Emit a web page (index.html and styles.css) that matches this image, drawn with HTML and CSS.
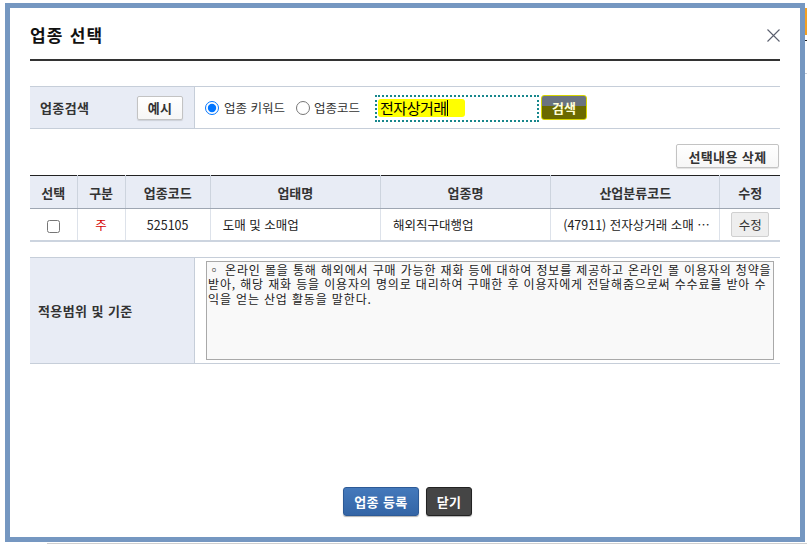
FILE: index.html
```html
<!DOCTYPE html>
<html lang="ko">
<head>
<meta charset="utf-8">
<title>업종 선택</title>
<link rel="stylesheet" href="styles.css">
</head>
<body>
<div class="page">
  <div class="modal">
    <div class="modal-head">
      <h1 class="title">업종 선택</h1>
      <button class="close" aria-label="닫기">
        <svg width="13" height="13" viewBox="0 0 13 13"><path d="M0.5 0.5 L12.5 12.5 M12.5 0.5 L0.5 12.5" stroke="#5a5f6e" stroke-width="1.1" fill="none"/></svg>
      </button>
    </div>

    <div class="form-row search-row">
      <div class="label-cell">
        <span class="label">업종검색</span>
        <button class="btn-white small">예시</button>
      </div>
      <div class="value-cell">
        <label class="radio"><input type="radio" name="t" checked><span>업종 키워드</span></label>
        <label class="radio"><input type="radio" name="t"><span>업종코드</span></label>
        <div class="search-input"><span class="hl">전자상거래</span><span class="caret"></span></div>
        <button class="btn-search">검색</button>
      </div>
    </div>

    <div class="tools">
      <button class="btn-white wide">선택내용 삭제</button>
    </div>

    <table class="grid">
      <colgroup>
        <col style="width:47px"><col style="width:48px"><col style="width:85px"><col style="width:170px"><col style="width:170px"><col style="width:169px"><col style="width:60px">
      </colgroup>
      <thead>
        <tr><th>선택</th><th>구분</th><th>업종코드</th><th>업태명</th><th>업종명</th><th>산업분류코드</th><th>수정</th></tr>
      </thead>
      <tbody>
        <tr>
          <td class="c"><input type="checkbox" class="chk"></td>
          <td class="c red">주</td>
          <td class="c">525105</td>
          <td class="l">도매 및 소매업</td>
          <td class="l">해외직구대행업</td>
          <td class="l">(47911) 전자상거래 소매 …</td>
          <td class="c"><button class="btn-edit">수정</button></td>
        </tr>
      </tbody>
    </table>

    <div class="form-row desc-row">
      <div class="label-cell">
        <span class="label">적용범위 및 기준</span>
      </div>
      <div class="value-cell desc-cell">
        <div class="textarea">
          <div class="tl">◦ 온라인 몰을 통해 해외에서 구매 가능한 재화 등에 대하여 정보를 제공하고 온라인 몰 이용자의 청약을</div>
          <div class="tl">받아, 해당 재화 등을 이용자의 명의로 대리하여 구매한 후 이용자에게 전달해줌으로써 수수료를 받아 수</div>
          <div class="tl">익을 얻는 산업 활동을 말한다.</div>
        </div>
      </div>
    </div>

    <div class="footer">
      <button class="btn-blue">업종 등록</button>
      <button class="btn-dark">닫기</button>
    </div>
  </div>
  <div class="edge"></div>
</div>
<div class="below"></div>
</body>
</html>
```

FILE: styles.css
```css
* { box-sizing: border-box; }
html, body { margin: 0; padding: 0; background: #fff; }
body {
  font-family: "Noto Sans CJK KR", "Noto Sans", sans-serif;
  font-size: 12px;
  color: #222;
  width: 807px;
  height: 551px;
  overflow: hidden;
}
.page {
  display: flex;
  padding: 3px 0 0 5px;
}
.edge {
  width: 2px;
  height: 539px;
  background: linear-gradient(#fff 0 5px, #f3a024 5px 32px, #fff 32px 37px, #222 37px 38px, #fff 38px 70px, #c8cdd6 70px 71px, #fff 71px);
}
.modal {
  width: 800px;
  height: 539px;
  border: 5px solid #7597c1;
  background: #fff;
  padding: 0 20px;
  display: flex;
  flex-direction: column;
}
.modal-head {
  height: 53px;
  border-bottom: 2px solid #333;
  display: flex;
  justify-content: space-between;
  align-items: flex-start;
  padding-top: 14px;
}
.title {
  margin: 0;
  font-size: 17px;
  font-weight: bold;
  line-height: 26px;
  color: #111;
  letter-spacing: 1.2px;
}
.close {
  border: 0;
  background: none;
  padding: 0;
  margin: 7px 0 0 0;
  width: 13px;
  height: 13px;
  display: block;
}
.close svg { display: block; }

.form-row {
  display: grid;
  grid-template-columns: 165px 1fr;
  border-top: 1px solid #c6ced9;
  border-bottom: 1px solid #c6ced9;
}
.search-row { margin-top: 25px; height: 43px; }
.label-cell {
  background: #e8ecf5;
  border-right: 1px solid #c6ced9;
  display: flex;
  align-items: center;
  justify-content: space-between;
  padding: 0 11px 0 10px;
}
.label {
  font-size: 13px;
  font-weight: bold;
  color: #333;
  letter-spacing: 0.4px;
}
.value-cell {
  display: flex;
  align-items: center;
  padding-left: 10px;
}
.radio {
  display: flex;
  align-items: center;
  font-size: 12.5px;
  color: #333;
  margin-right: 11px;
}
.radio input {
  margin: 0 5px 0 0;
  width: 14px;
  height: 14px;
}
.radio + .radio { margin-right: 15px; }
.radio + .radio input { margin-right: 4px; }
.search-input {
  width: 164px;
  height: 27px;
  border: 2px dotted #17878c;
  display: flex;
  align-items: center;
  padding-left: 1px;
  margin-top: 1px;
}
.hl {
  background: #ffff00;
  font-size: 15px;
  line-height: 18px;
  padding: 0 18px 0 2px;
  color: #000;
  border-radius: 3px;
  letter-spacing: -0.5px;
}
.caret {
  width: 1px;
  height: 16px;
  background: #000;
  margin-left: -18px;
}
.btn-search {
  margin-left: 2px;
  width: 46px;
  height: 25px;
  border: 1px solid #d6d400;
  border-radius: 3px;
  background: linear-gradient(#6a7380 0 45%, #6b6a00 45%);
  color: #ffffd8;
  font-family: inherit;
  font-size: 13px;
  font-weight: bold;
  padding: 0;
}

.tools {
  display: flex;
  justify-content: flex-end;
  margin-top: 15px;
  padding-right: 1px;
}
.btn-white {
  height: 24px;
  padding: 0 9px;
  border: 1px solid #c3c3c3;
  border-radius: 2px;
  background: linear-gradient(#fff, #f6f6f6);
  box-shadow: 0 1px 1px rgba(0,0,0,0.12);
  font-family: inherit;
  font-size: 13px;
  font-weight: bold;
  color: #333;
  letter-spacing: 0.4px;
}
.btn-white.small { width: 46px; padding: 0; }
.btn-white.wide { width: 103px; padding: 0; }

.grid {
  margin-top: 7px;
  width: 750px;
  border-collapse: collapse;
  table-layout: fixed;
  border-top: 1px solid #222;
}
.grid th {
  height: 33px;
  background: #e8ecf5;
  font-size: 13px;
  font-weight: bold;
  color: #333;
  border-left: 1px solid #cdd4de;
  border-bottom: 1px solid #9ea6b2;
  padding: 0;
}
.grid td {
  height: 32px;
  font-size: 12.5px;
  color: #222;
  border-left: 1px solid #dde2ea;
  border-bottom: 2px solid #ccd4df;
  padding: 0;
  white-space: nowrap;
  overflow: hidden;
}
.grid th:first-child, .grid td:first-child { border-left: 0; }
.grid td.c { text-align: center; }
.grid td.l { text-align: left; padding-left: 12px; }
.grid td.red { color: #d40000; }
.chk { width: 13px; height: 13px; margin: 0; vertical-align: middle; }
.btn-edit {
  width: 38px;
  height: 25px;
  border: 1px solid #d0d0d0;
  border-radius: 2px;
  background: #eeeeee;
  font-family: inherit;
  font-size: 12.5px;
  color: #333;
  padding: 0;
  vertical-align: middle;
}

.desc-row { margin-top: 15px; height: 107px; }
.desc-row .label-cell { padding-left: 8px; }
.desc-cell { padding: 3px 6px 3px 11px; align-items: stretch; }
.textarea {
  flex: 1;
  background: #f9f9f9;
  border: 1px solid #a9a9a9;
  padding: 1px 0 0 1px;
  font-size: 12px;
  line-height: 14.5px;
  color: #222;
}
.tl { white-space: nowrap; letter-spacing: 0.85px; }

.footer {
  margin-top: auto;
  padding-bottom: 21px;
  display: flex;
  justify-content: center;
  gap: 7px;
  padding-left: 5px;
}
.btn-blue, .btn-dark {
  height: 29px;
  border-radius: 3px;
  font-family: inherit;
  font-size: 13px;
  font-weight: bold;
  color: #fff;
  padding: 0;
  box-shadow: 0 1px 1px rgba(0,0,0,0.3);
  letter-spacing: 0.4px;
}
.btn-blue {
  width: 76px;
  background: linear-gradient(#4479bb, #3465a6);
  border: 1px solid #2d5a96;
}
.btn-dark {
  width: 46px;
  background: #454545;
  border: 1px solid #222;
}
.below {
  margin: 1px 0 0 47px;
  height: 1px;
  background: #cfcfcf;
}
```
